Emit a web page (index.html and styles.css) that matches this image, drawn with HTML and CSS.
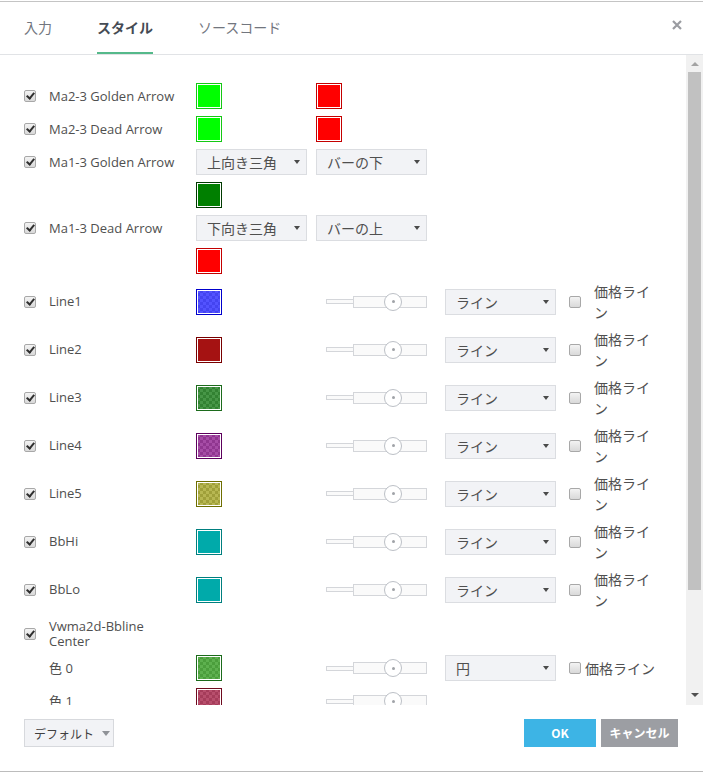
FILE: index.html
```html
<!DOCTYPE html>
<html lang="ja">
<head>
  <meta charset="UTF-8" />
  <meta name="viewport" content="width=device-width, initial-scale=1.0" />
  <title>スタイル</title>
  <link rel="stylesheet" href="styles.css">
</head>
<body>
  <div class="dialog">
    <div class="dialog-header">
      <span class="tab">入力</span>
      <span class="tab active">スタイル</span>
      <span class="tab">ソースコード</span>
      <span class="close">
        <svg width="10" height="10" viewBox="0 0 10 10"><path d="M1 1 L9 9 M9 1 L1 9" stroke="#9a9ca1" stroke-width="2.2" /></svg>
      </span>
    </div>

    <div class="dialog-body">
      <div class="content">
        <div class="row">
          <span class="check on"></span>
          <span class="label">Ma2-3 Golden Arrow</span>
          <div class="col"><span class="swatch" style="--c:#00ff00;--b:#14c814"></span></div>
          <div class="col"><span class="swatch" style="--c:#ff0000;--b:#c40000"></span></div>
        </div>
        <div class="row">
          <span class="check on"></span>
          <span class="label">Ma2-3 Dead Arrow</span>
          <div class="col"><span class="swatch" style="--c:#00ff00;--b:#14c814"></span></div>
          <div class="col"><span class="swatch" style="--c:#ff0000;--b:#c40000"></span></div>
        </div>
        <div class="row">
          <span class="check on"></span>
          <span class="label">Ma1-3 Golden Arrow</span>
          <div class="col"><div class="select">上向き三角</div></div>
          <div class="col"><div class="select">バーの下</div></div>
        </div>
        <div class="row sub">
          <span class="swatch" style="--c:#007f00;--b:#003a00"></span>
        </div>
        <div class="row">
          <span class="check on"></span>
          <span class="label">Ma1-3 Dead Arrow</span>
          <div class="col"><div class="select">下向き三角</div></div>
          <div class="col"><div class="select">バーの上</div></div>
        </div>
        <div class="row sub">
          <span class="swatch" style="--c:#ff0000;--b:#c40000"></span>
        </div>

        <div class="row line">
          <span class="check on"></span>
          <span class="label">Line1</span>
          <div class="col wide"><span class="swatch" style="--c:rgba(40,40,255,.8);--b:#0000cc"></span></div>
          <div class="slider"><span class="thin"></span><span class="thick"></span><span class="knob"></span></div>
          <div class="select">ライン</div>
          <span class="check"></span>
          <span class="price">価格ライン</span>
        </div>
        <div class="row line">
          <span class="check on"></span>
          <span class="label">Line2</span>
          <div class="col wide"><span class="swatch" style="--c:#a51212;--b:#780000"></span></div>
          <div class="slider"><span class="thin"></span><span class="thick"></span><span class="knob"></span></div>
          <div class="select">ライン</div>
          <span class="check"></span>
          <span class="price">価格ライン</span>
        </div>
        <div class="row line">
          <span class="check on"></span>
          <span class="label">Line3</span>
          <div class="col wide"><span class="swatch" style="--c:rgba(0,110,0,.72);--b:#1c6b1c"></span></div>
          <div class="slider"><span class="thin"></span><span class="thick"></span><span class="knob"></span></div>
          <div class="select">ライン</div>
          <span class="check"></span>
          <span class="price">価格ライン</span>
        </div>
        <div class="row line">
          <span class="check on"></span>
          <span class="label">Line4</span>
          <div class="col wide"><span class="swatch" style="--c:rgba(128,0,128,.7);--b:#5c005c"></span></div>
          <div class="slider"><span class="thin"></span><span class="thick"></span><span class="knob"></span></div>
          <div class="select">ライン</div>
          <span class="check"></span>
          <span class="price">価格ライン</span>
        </div>
        <div class="row line">
          <span class="check on"></span>
          <span class="label">Line5</span>
          <div class="col wide"><span class="swatch" style="--c:rgba(150,150,0,.68);--b:#6e6e00"></span></div>
          <div class="slider"><span class="thin"></span><span class="thick"></span><span class="knob"></span></div>
          <div class="select">ライン</div>
          <span class="check"></span>
          <span class="price">価格ライン</span>
        </div>
        <div class="row line">
          <span class="check on"></span>
          <span class="label">BbHi</span>
          <div class="col wide"><span class="swatch" style="--c:#00aaaa;--b:#007f7f"></span></div>
          <div class="slider"><span class="thin"></span><span class="thick"></span><span class="knob"></span></div>
          <div class="select">ライン</div>
          <span class="check"></span>
          <span class="price">価格ライン</span>
        </div>
        <div class="row line">
          <span class="check on"></span>
          <span class="label">BbLo</span>
          <div class="col wide"><span class="swatch" style="--c:#00aaaa;--b:#007f7f"></span></div>
          <div class="slider"><span class="thin"></span><span class="thick"></span><span class="knob"></span></div>
          <div class="select">ライン</div>
          <span class="check"></span>
          <span class="price">価格ライン</span>
        </div>

        <div class="row group">
          <span class="check on"></span>
          <span class="label">Vwma2d-Bbline Center</span>
        </div>
        <div class="row">
          <span class="check blank"></span>
          <span class="label">色 0</span>
          <div class="col wide"><span class="swatch" style="--c:rgba(40,150,20,.75);--b:#1b6b1b"></span></div>
          <div class="slider"><span class="thin"></span><span class="thick"></span><span class="knob"></span></div>
          <div class="select">円</div>
          <span class="check"></span>
          <span class="price inline">価格ライン</span>
        </div>
        <div class="row">
          <span class="check blank"></span>
          <span class="label">色 1</span>
          <div class="col wide"><span class="swatch" style="--c:rgba(160,20,60,.75);--b:#6e0a1e"></span></div>
          <div class="slider"><span class="thin"></span><span class="thick"></span><span class="knob"></span></div>
        </div>
      </div>

      <div class="scrollbar">
        <span class="sb-btn up"></span>
        <span class="sb-track"><span class="sb-thumb"></span></span>
        <span class="sb-btn down"></span>
      </div>
    </div>

    <div class="dialog-footer">
      <span class="btn-default">デフォルト</span>
      <span class="btn ok">OK</span>
      <span class="btn cancel">キャンセル</span>
    </div>
  </div>
</body>
</html>
```

FILE: styles.css
```css
html, body {
  margin: 0;
  background: #fff;
}
body {
  font-family: "Open Sans", "Noto Sans CJK JP", sans-serif;
  font-size: 13px;
  color: #4f4f4f;
}
.dialog {
  margin-top: 1px;
  border-top: 1px solid #c4c4c4;
  border-bottom: 1px solid #bcbcbc;
  display: flex;
  flex-direction: column;
}

/* header / tabs */
.dialog-header {
  display: flex;
  height: 52px;
  padding-left: 24px;
  border-bottom: 1px solid #e1e3e6;
}
.tab {
  display: flex;
  align-items: center;
  box-sizing: border-box;
  margin-right: 45px;
  border-bottom: 2px solid transparent;
  font-family: "Noto Sans CJK JP", sans-serif;
  font-size: 14px;
  color: #72767e;
}
.tab.active {
  font-weight: bold;
  color: #454b54;
  border-bottom-color: #55b98a;
}
.close {
  margin-left: auto;
  margin-right: 21px;
  margin-top: 18px;
  width: 10px;
  height: 10px;
}
.close svg {
  display: block;
}

/* body */
.dialog-body {
  display: flex;
  height: 650px;
}
.content {
  flex: 1;
  overflow: hidden;
  padding: 28px 0 0 24px;
}
.row {
  display: flex;
  align-items: center;
  min-height: 26px;
  margin-bottom: 7px;
}
.row.sub {
  padding-left: 172px;
}
.row.line {
  min-height: 41px;
}
.row.group {
  min-height: 33px;
  margin-bottom: 5px;
}
.check {
  position: relative;
  flex: none;
  width: 12px;
  height: 12px;
  box-sizing: border-box;
  border: 1px solid #a8a8a8;
  border-radius: 2px;
  background: linear-gradient(#f3f3f3, #d9d9d9);
}
.check.on::after {
  content: "";
  position: absolute;
  left: 3px;
  top: 0;
  width: 3px;
  height: 6px;
  border: solid #2f2f2f;
  border-width: 0 2.2px 2.2px 0;
  transform: rotate(40deg);
}
.check.blank {
  visibility: hidden;
}
.label {
  flex: none;
  width: 135px;
  margin-left: 13px;
  padding-right: 12px;
  line-height: 15px;
}
.col {
  flex: none;
  width: 120px;
}
.col.wide {
  width: 130px;
}
.swatch {
  display: block;
  width: 26px;
  height: 26px;
  box-sizing: border-box;
  border: 1px solid var(--b);
  box-shadow: inset 0 0 0 1px #fff;
  background: linear-gradient(var(--c), var(--c)), repeating-conic-gradient(#b4b4b4 0 25%, #fff 0 50%) 0 0 / 6px 6px;
}
.select {
  flex: none;
  display: flex;
  align-items: center;
  width: 111px;
  height: 26px;
  box-sizing: border-box;
  padding: 0 6px 0 10px;
  border: 1px solid #dbdde1;
  background: #f2f3f6;
  font-family: "Noto Sans CJK JP", sans-serif;
  font-size: 14px;
  color: #4f4f4f;
}
.select::after {
  content: "";
  margin-left: auto;
  border-left: 3.5px solid transparent;
  border-right: 3.5px solid transparent;
  border-top: 4px solid #4a4a4a;
}
.row .select + .check {
  margin-left: 13px;
}
.price {
  flex: none;
  width: 60px;
  margin-left: 13px;
  font-family: "Noto Sans CJK JP", sans-serif;
  font-size: 14px;
  line-height: 20.5px;
  color: #505050;
}
.price.inline {
  width: auto;
  margin-left: 4px;
}

/* opacity slider */
.slider {
  position: relative;
  flex: none;
  display: flex;
  align-items: center;
  width: 101px;
  height: 18px;
  margin-right: 18px;
}
.slider .thin {
  width: 27px;
  height: 5px;
  box-sizing: border-box;
  border: 1px solid #d4d6da;
  border-right: none;
  background: #fafafa;
}
.slider .thick {
  flex: 1;
  height: 12px;
  box-sizing: border-box;
  border: 1px solid #d4d6da;
  background: #fafafa;
}
.slider .knob {
  position: absolute;
  left: 58px;
  top: 0;
  width: 18px;
  height: 18px;
  box-sizing: border-box;
  border: 1px solid #bcc0c6;
  border-radius: 50%;
  background: #fff;
}
.slider .knob::after {
  content: "";
  position: absolute;
  left: 6.5px;
  top: 6.5px;
  width: 3px;
  height: 3px;
  border-radius: 50%;
  background: #a0a3a8;
}

/* scrollbar */
.scrollbar {
  flex: none;
  width: 17px;
  display: flex;
  flex-direction: column;
  background: #f1f1f1;
}
.sb-btn {
  height: 17px;
  display: flex;
  align-items: center;
  justify-content: center;
}
.sb-btn::after {
  content: "";
  border-left: 4px solid transparent;
  border-right: 4px solid transparent;
}
.sb-btn.up::after {
  border-bottom: 4px solid #a3a3a3;
}
.sb-btn.down {
  align-items: flex-start;
  padding-top: 5px;
  box-sizing: border-box;
}
.sb-btn.down::after {
  border-top: 4px solid #505050;
}
.sb-track {
  flex: 1;
  padding: 0 2px;
}
.sb-thumb {
  display: block;
  height: 518px;
  background: #c1c1c1;
}

/* footer */
.dialog-footer {
  display: flex;
  align-items: flex-start;
  height: 66px;
  box-sizing: border-box;
  padding: 14px 25px 0 24px;
}
.btn-default {
  display: flex;
  align-items: center;
  width: 90px;
  height: 28px;
  box-sizing: border-box;
  padding-left: 9px;
  border: 1px solid #d7d9dd;
  background: #f2f3f6;
  font-family: "Noto Sans CJK JP", sans-serif;
  font-size: 12px;
  color: #3f3f3f;
}
.btn-default::after {
  content: "";
  margin-left: 8px;
  border-left: 4px solid transparent;
  border-right: 4px solid transparent;
  border-top: 5px solid #8f9297;
}
.btn {
  display: flex;
  align-items: center;
  justify-content: center;
  height: 28px;
  padding-bottom: 2px;
  box-sizing: border-box;
  font-family: "Noto Sans CJK JP", sans-serif;
  font-size: 12px;
  font-weight: bold;
  color: #fff;
}
.btn.ok {
  margin-left: auto;
  width: 72px;
  background: #3db4e5;
}
.btn.cancel {
  margin-left: 5px;
  width: 77px;
  background: #9c9ea3;
}
```
